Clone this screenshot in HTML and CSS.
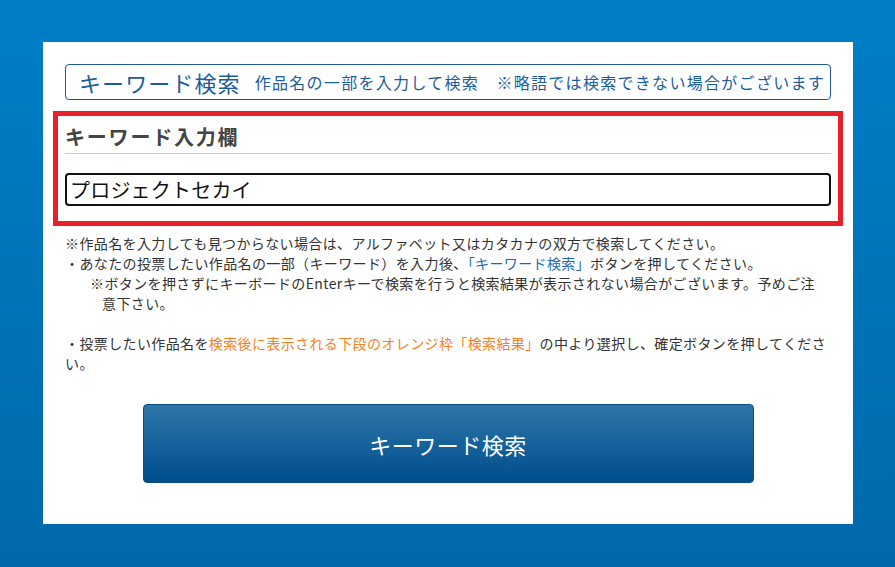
FILE: index.html
```html
<!DOCTYPE html>
<html lang="ja">
<head>
  <meta charset="UTF-8" />
  <title>キーワード検索</title>
  <link rel="stylesheet" href="styles.css">
</head>
<body>

  <div class="panel">
    <div class="search-title">
      <span class="big">キーワード検索</span>
      <span class="small">作品名の一部を入力して検索　※略語では検索できない場合がございます</span>
    </div>

    <div class="keyword-box">
      <h2>キーワード入力欄</h2>
      <input type="text" id="keyword" value="プロジェクトセカイ" />
    </div>

    <div class="notes">
      <p>※作品名を入力しても見つからない場合は、アルファベット又はカタカナの双方で検索してください。</p>
      <p>・あなたの投票したい作品名の一部（キーワード）を入力後、<span class="blue">「キーワード検索」</span>ボタンを押してください。</p>
      <p class="indent">※ボタンを押さずにキーボードのEnterキーで検索を行うと検索結果が表示されない場合がございます。予めご注意下さい。</p>
      <p class="gap">・投票したい作品名を<span class="orange">検索後に表示される下段のオレンジ枠「検索結果」</span>の中より選択し、確定ボタンを押してください。</p>
    </div>

    <button class="search-btn">キーワード検索</button>
  </div>

</body>
</html>
```

FILE: styles.css
```css
body {
  margin: 0;
  height: 567px;
  padding-top: 42px;
  box-sizing: border-box;
  background: linear-gradient(to bottom, #007ec7, #0069aa);
  font-family: "Noto Sans CJK JP", "Noto Sans", sans-serif;
  overflow: hidden;
}

.panel {
  width: 810px;
  height: 482px;
  margin-left: 43px;
  background-color: #fff;
  padding: 22px 22px 0;
  box-sizing: border-box;
}

.search-title {
  display: flex;
  align-items: center;
  height: 36px;
  border: 1px solid #1d5a94;
  border-radius: 4px;
  box-sizing: border-box;
  padding-left: 13px;
  color: #1d5d99;
  white-space: nowrap;
  overflow: hidden;
}

.search-title .big {
  font-size: 22px;
  letter-spacing: 1.1px;
  margin-right: 14px;
}

.search-title .small {
  font-size: 16px;
  letter-spacing: 1.3px;
}

.keyword-box {
  margin: 11px -12px 0;
  border: 5px solid #e8202a;
  padding: 7px 7px 15px;
}

.keyword-box h2 {
  margin: 0;
  font-size: 20px;
  letter-spacing: 1.8px;
  line-height: 28px;
  color: #444;
  padding-bottom: 2px;
  border-bottom: 1px solid #ccc;
}

.keyword-box input {
  display: block;
  width: 100%;
  height: 33px;
  margin-top: 19px;
  box-sizing: border-box;
  border: 2px solid #111;
  border-radius: 4px;
  padding: 0 3px;
  font-family: inherit;
  font-size: 20px;
  letter-spacing: 0.2px;
  color: #111;
  outline: none;
}

.notes {
  margin-top: 7px;
  font-size: 14px;
  letter-spacing: 0.38px;
  line-height: 20px;
  color: #333;
}

.notes p {
  margin: 0;
}

.notes .indent {
  padding-left: 37px;
  padding-right: 10px;
  text-indent: -12px;
}

.notes .gap {
  margin-top: 20px;
}

.blue {
  color: #1a6cb0;
}

.orange {
  color: #f5821f;
}

.search-btn {
  display: block;
  width: 611px;
  height: 79px;
  margin: 31px auto 0;
  border: 1px solid #0b4f87;
  border-radius: 4px;
  background: linear-gradient(to bottom, #2e75a9, #004e8d);
  color: #fff;
  font-family: inherit;
  font-size: 22px;
  letter-spacing: 0.5px;
  cursor: pointer;
}
```
